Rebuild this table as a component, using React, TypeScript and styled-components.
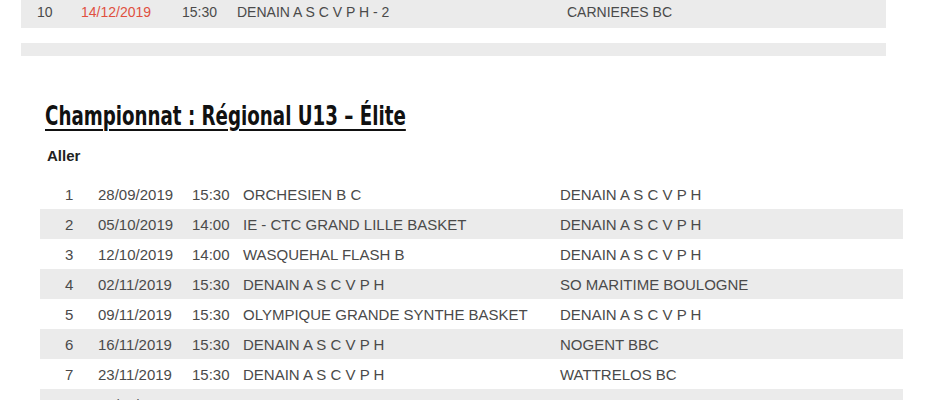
import React from "react";
import styled, { createGlobalStyle } from "styled-components";

const GlobalStyle = createGlobalStyle`
  html, body {
    margin: 0;
    padding: 0;
    background: #fff;
  }
  body {
    font-family: "Liberation Sans", Arial, sans-serif;
    color: #4a4a4a;
    overflow: hidden;
  }
`;

type Match = {
  n: number;
  date: string;
  time: string;
  home: string;
  away: string;
  late?: boolean;
};

const previous: Match[] = [
  { n: 10, date: "14/12/2019", time: "15:30", home: "DENAIN A S C V P H - 2", away: "CARNIERES BC", late: true },
];

const aller: Match[] = [
  { n: 1, date: "28/09/2019", time: "15:30", home: "ORCHESIEN B C", away: "DENAIN A S C V P H" },
  { n: 2, date: "05/10/2019", time: "14:00", home: "IE - CTC GRAND LILLE BASKET", away: "DENAIN A S C V P H" },
  { n: 3, date: "12/10/2019", time: "14:00", home: "WASQUEHAL FLASH B", away: "DENAIN A S C V P H" },
  { n: 4, date: "02/11/2019", time: "15:30", home: "DENAIN A S C V P H", away: "SO MARITIME BOULOGNE" },
  { n: 5, date: "09/11/2019", time: "15:30", home: "OLYMPIQUE GRANDE SYNTHE BASKET", away: "DENAIN A S C V P H" },
  { n: 6, date: "16/11/2019", time: "15:30", home: "DENAIN A S C V P H", away: "NOGENT BBC" },
  { n: 7, date: "23/11/2019", time: "15:30", home: "DENAIN A S C V P H", away: "WATTRELOS BC" },
  { n: 8, date: "30/11/2019", time: "14:30", home: "IE - CTC CAUCHY CRICOURT BASKET", away: "DENAIN A S C V P H" },
];

const Page = styled.div`
  display: flex;
  flex-direction: column;
  height: 400px;
  overflow: hidden;
`;

const PrevBlock = styled.div`
  margin: -4px 54px 0 21px;
  display: flex;
  flex-direction: column;
`;

const FooterBar = styled.div`
  height: 13px;
  margin-top: 15px;
  background: #ebebeb;
`;

const Section = styled.section`
  padding: 0 37px 0 40px;
  display: flex;
  flex-direction: column;
`;

const Title = styled.h2`
  align-self: flex-start;
  margin: 45px 0 0 5px;
  font-family: "DejaVu Sans Condensed", "DejaVu Sans", sans-serif;
  font-stretch: condensed;
  font-weight: 700;
  font-size: 26px;
  line-height: 30px;
  color: #111;
  text-decoration: underline;
  text-decoration-thickness: 2px;
  text-underline-offset: 4px;
  transform: scaleX(0.78);
  transform-origin: left center;
  white-space: nowrap;
`;

const Phase = styled.div`
  margin: 16px 0 15px 7px;
  font-weight: 700;
  font-size: 15px;
  line-height: 17px;
  color: #222;
`;

const Row = styled.div<{ $shaded: boolean; $cols: string; $h: number; $size: number }>`
  display: grid;
  grid-template-columns: ${(p) => p.$cols};
  align-items: center;
  flex-shrink: 0;
  height: ${(p) => p.$h}px;
  background: ${(p) => (p.$shaded ? "#ebebeb" : "transparent")};
  font-size: ${(p) => p.$size}px;
  white-space: nowrap;
`;

const DateCell = styled.span<{ $late?: boolean }>`
  color: ${(p) => (p.$late ? "#e0503f" : "inherit")};
`;

const topCols = "16px 44px 101px 55px 330px 1fr";
const mainCols = "25px 33px 94px 51px 317px 1fr";

export default function App() {
  return (
    <Page>
      <GlobalStyle />
      <PrevBlock>
        {previous.map((m) => (
          <Row key={m.n} $shaded $cols={topCols} $h={32} $size={14}>
            <span />
            <span>{m.n}</span>
            <DateCell $late={m.late}>{m.date}</DateCell>
            <span>{m.time}</span>
            <span>{m.home}</span>
            <span>{m.away}</span>
          </Row>
        ))}
        <FooterBar />
      </PrevBlock>
      <Section>
        <Title>Championnat : Régional U13 – Élite</Title>
        <Phase>Aller</Phase>
        {aller.map((m, i) => (
          <Row key={m.n} $shaded={i % 2 === 1} $cols={mainCols} $h={30} $size={15}>
            <span />
            <span>{m.n}</span>
            <DateCell>{m.date}</DateCell>
            <span>{m.time}</span>
            <span>{m.home}</span>
            <span>{m.away}</span>
          </Row>
        ))}
      </Section>
    </Page>
  );
}
